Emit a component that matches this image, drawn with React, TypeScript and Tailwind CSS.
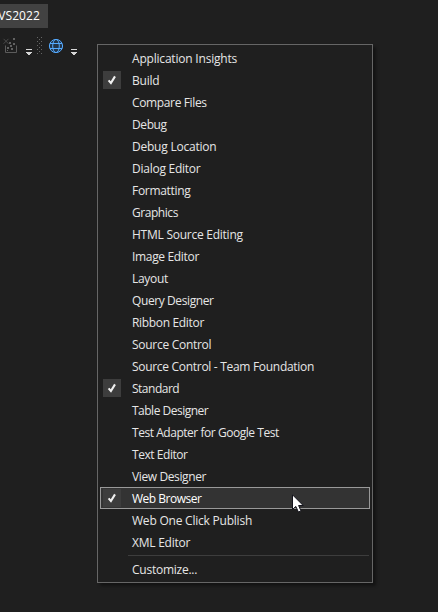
type Item = { label: string; tracking: string; checked?: boolean; active?: boolean };

const items: Item[] = [
  { label: "Application Insights", tracking: "tracking-[-0.2px]" },
  { label: "Build", tracking: "tracking-[-0.2px]", checked: true },
  { label: "Compare Files", tracking: "tracking-[-0.36px]" },
  { label: "Debug", tracking: "tracking-[-0.4px]" },
  { label: "Debug Location", tracking: "tracking-[-0.23px]" },
  { label: "Dialog Editor", tracking: "tracking-[-0.25px]" },
  { label: "Formatting", tracking: "tracking-[-0.3px]" },
  { label: "Graphics", tracking: "tracking-[-0.45px]" },
  { label: "HTML Source Editing", tracking: "tracking-[-0.25px]" },
  { label: "Image Editor", tracking: "tracking-[-0.33px]" },
  { label: "Layout", tracking: "tracking-[-0.3px]" },
  { label: "Query Designer", tracking: "tracking-[-0.4px]" },
  { label: "Ribbon Editor", tracking: "tracking-[-0.33px]" },
  { label: "Source Control", tracking: "tracking-[-0.28px]" },
  { label: "Source Control - Team Foundation", tracking: "tracking-[-0.3px]" },
  { label: "Standard", tracking: "tracking-[-0.5px]", checked: true },
  { label: "Table Designer", tracking: "tracking-[-0.5px]" },
  { label: "Test Adapter for Google Test", tracking: "tracking-[-0.46px]" },
  { label: "Text Editor", tracking: "tracking-[-0.45px]" },
  { label: "View Designer", tracking: "tracking-[-0.38px]" },
  { label: "Web Browser", tracking: "tracking-[-0.5px]", checked: true, active: true },
  { label: "Web One Click Publish", tracking: "tracking-[-0.22px]" },
  { label: "XML Editor", tracking: "tracking-[-0.24px]" },
];

function Check() {
  return (
    <svg width="18" height="18" viewBox="0 0 18 18" fill="none">
      <path d="M5.6 9.4 L7.9 12 L12 5.4" stroke="#f0f0f0" strokeWidth="2.1" />
    </svg>
  );
}

function Row({ item }: { item: Item }) {
  return (
    <div
      className={`flex h-[22px] items-center border ${
        item.active ? "border-[#999999] bg-[#333333] text-white" : "border-transparent text-[#e6e6e6]"
      }`}
    >
      <div className={`ml-[2px] mr-[11px] size-[18px] shrink-0 ${item.checked ? "bg-[#3d3d3d]" : ""}`}>
        {item.checked && <Check />}
      </div>
      <span className={`whitespace-nowrap pt-[2px] ${item.tracking}`}>{item.label}</span>
    </div>
  );
}

function BuildIcon() {
  return (
    <svg width="16" height="16" viewBox="0 0 16 16" className="shrink-0">
      <path d="M1.5 .8 L6.5 5.8 M6.5 .8 L1.5 5.8" stroke="#4a4a4a" fill="none" />
      <path d="M3.5 7.5 V14.5 H14.5 V7.5" stroke="#5c5c5c" fill="none" />
      <path
        d="M11 0h2v2h-2z M7 4h2v2h-2z M11 5h2v2h-2z M8 7h2v2h-2z M5 9h2v2h-2z M9 10h2v2h-2z M5 12h1v1h-1z"
        fill="#626262"
      />
    </svg>
  );
}

function Overflow() {
  return (
    <svg width="6" height="6" viewBox="0 0 6 6" className="mt-[11px] shrink-0" shapeRendering="crispEdges">
      <path d="M0 0h6v1H0z M0 3h6v1H0z M1 4h4v1H1z M2 5h2v1H2z" fill="#d6d6d6" />
    </svg>
  );
}

const gripRows = [0, 4, 8, 12, 16];

function Grip() {
  return (
    <svg width="5" height="18" viewBox="0 0 5 18" className="ml-[5px] mt-[-1px] shrink-0" fill="#666666">
      {gripRows.map((y) => (
        <g key={y}>
          <rect x="0" y={y} width="1" height="1" />
          <rect x="4" y={y} width="1" height="1" />
          {y < 16 && <rect x="2" y={y + 2} width="1" height="1" />}
        </g>
      ))}
    </svg>
  );
}

function GlobeIcon() {
  return (
    <svg
      width="16"
      height="16"
      viewBox="0 0 16 16"
      className="ml-[6px] shrink-0"
      fill="none"
      stroke="#55aaff"
    >
      <circle cx="8" cy="8" r="6.6" fill="#223448" />
      <ellipse cx="8" cy="8" rx="3.3" ry="6.6" />
      <path d="M2 5.5 H14 M2 10.5 H14" />
    </svg>
  );
}

function Cursor() {
  return (
    <svg width="13" height="20" viewBox="0 0 13 20" className="absolute left-[292px] top-[494px]">
      <path
        d="M.5 .8 V15.5 L3.8 12.4 L6.4 18 L9 16.9 L6.6 11.5 H11.2 Z"
        fill="#ffffff"
        stroke="#14141c"
      />
    </svg>
  );
}

export default function App() {
  return (
    <div className="relative h-[612px] w-[438px] overflow-hidden bg-[#1f1f1f] font-['Open_Sans','Noto_Sans',sans-serif] text-[12px] leading-[16px]">
      <div className="flex pt-1">
        <div className="flex h-6 w-12 items-center justify-end bg-[#424242] pr-[8px] text-white">
          <span className="tracking-[0.1px]">VS2022</span>
        </div>
      </div>
      <div className="flex items-start pl-[2px] pt-[10px]">
        <BuildIcon />
        <div className="ml-[8px]">
          <Overflow />
        </div>
        <Grip />
        <GlobeIcon />
        <div className="ml-[7px]">
          <Overflow />
        </div>
      </div>
      <div className="absolute left-[97px] top-[44px] w-[276px] border border-[#666666] bg-[#1f1f1f] p-[2px] shadow-[3px_3px_3px_rgba(0,0,0,0.4)]">
        {items.map((item) => (
          <Row key={item.label} item={item} />
        ))}
        <div className="my-[2px] ml-[28px] mr-px h-px bg-[#3d3d3d]" />
        <Row item={{ label: "Customize...", tracking: "tracking-[-0.25px]" }} />
      </div>
      <Cursor />
    </div>
  );
}
